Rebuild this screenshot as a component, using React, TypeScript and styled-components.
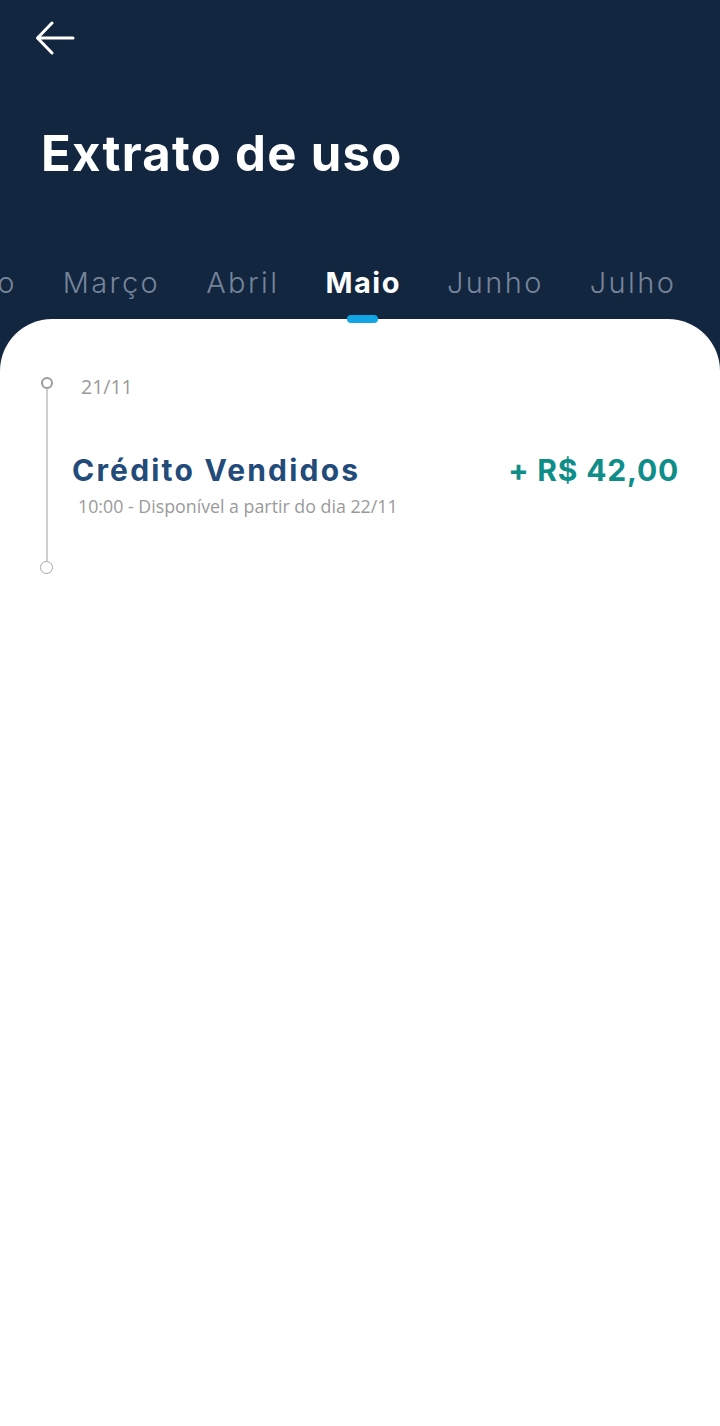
import React from 'react';
import styled, { createGlobalStyle } from 'styled-components';

const GlobalStyle = createGlobalStyle`
  html, body {
    margin: 0;
    padding: 0;
    background: #ffffff;
  }
  * {
    box-sizing: border-box;
  }
`;

const months = ['Fevereiro', 'Março', 'Abril', 'Maio', 'Junho', 'Julho'];
const activeMonth = 'Maio';

const App: React.FC = () => {
  return (
    <Page>
      <GlobalStyle />
      <Header>
        <BackButton aria-label="Voltar">
          <svg width="40" height="34" viewBox="0 0 40 34" fill="none">
            <path
              d="M38 17H3M17 2L2.5 17L17 32"
              stroke="#ffffff"
              strokeWidth="3"
              strokeLinecap="round"
              strokeLinejoin="round"
            />
          </svg>
        </BackButton>
        <Title>Extrato de uso</Title>
        <Tabs>
          {months.map((m) => (
            <Tab key={m} $active={m === activeMonth}>
              {m}
              {m === activeMonth && <Indicator />}
            </Tab>
          ))}
        </Tabs>
      </Header>
      <Card>
        <Group>
          <Rail>
            <TopDot />
            <RailLine />
            <BottomDot />
          </Rail>
          <Content>
            <DateLabel>21/11</DateLabel>
            <Entry>
              <EntryTitle>Crédito Vendidos</EntryTitle>
              <Amount>+ R$ 42,00</Amount>
            </Entry>
            <EntryInfo>10:00 - Disponível a partir do dia 22/11</EntryInfo>
          </Content>
        </Group>
      </Card>
    </Page>
  );
};

export default App;

const Page = styled.div`
  min-height: 1426px;
  display: flex;
  flex-direction: column;
  background: #12263f;
  font-family: Inter, 'Noto Sans', sans-serif;
`;

const Header = styled.header`
  display: flex;
  flex-direction: column;
  position: relative;
  z-index: 1;
`;

const BackButton = styled.button`
  align-self: flex-start;
  margin: 21px 0 0 35px;
  padding: 0;
  border: 0;
  background: transparent;
  display: flex;
  cursor: pointer;
`;

const Title = styled.h1`
  margin: 69px 0 0 41px;
  color: #ffffff;
  font-size: 49px;
  font-weight: 700;
  line-height: 60px;
  letter-spacing: 1.3px;
`;

const Tabs = styled.nav`
  display: flex;
  gap: 46px;
  margin: 60px 0 0 -130px;
  height: 79px;
  overflow: hidden;
`;

const Tab = styled.div<{ $active?: boolean }>`
  position: relative;
  flex-shrink: 0;
  height: 79px;
  padding-top: 22px;
  font-size: 29px;
  line-height: 34px;
  font-weight: ${(p) => (p.$active ? 700 : 300)};
  letter-spacing: ${(p) => (p.$active ? '1.5px' : '2.4px')};
  color: ${(p) => (p.$active ? '#ffffff' : '#76849a')};
`;

const Indicator = styled.span`
  position: absolute;
  left: 50%;
  bottom: 0;
  width: 31px;
  height: 8px;
  margin-left: -16px;
  border-radius: 4px;
  background: #12a5e6;
`;

const Card = styled.main`
  flex: 1;
  margin-top: -4px;
  padding: 56px 41px 0 40px;
  background: #ffffff;
  border-radius: 52px 52px 0 0;
`;

const Group = styled.section`
  display: flex;
`;

const Rail = styled.div`
  width: 13px;
  padding-top: 2px;
  display: flex;
  flex-direction: column;
  align-items: center;
`;

const TopDot = styled.span`
  width: 12px;
  height: 12px;
  border: 2px solid #9b9b9b;
  border-radius: 50%;
`;

const RailLine = styled.span`
  flex: 1;
  width: 2px;
  background: #cfcfcf;
`;

const BottomDot = styled.span`
  width: 13px;
  height: 13px;
  border: 1px solid #a8a8a8;
  border-radius: 50%;
`;

const Content = styled.div`
  flex: 1;
  margin-left: 19px;
  padding-bottom: 57px;
`;

const DateLabel = styled.div`
  padding-left: 9px;
  font-family: 'Open Sans', 'Noto Sans', sans-serif;
  font-size: 19.5px;
  line-height: 24px;
  color: #9a9a9a;
`;

const Entry = styled.div`
  margin-top: 53px;
  display: flex;
  justify-content: space-between;
  align-items: center;
`;

const EntryTitle = styled.div`
  font-size: 30px;
  font-weight: 700;
  line-height: 36px;
  letter-spacing: 2.2px;
  color: #234b79;
`;

const Amount = styled.div`
  font-size: 30px;
  font-weight: 700;
  line-height: 36px;
  letter-spacing: 0.8px;
  color: #0f8e89;
`;

const EntryInfo = styled.div`
  margin-top: 7px;
  padding-left: 6px;
  font-family: 'Open Sans', 'Noto Sans', sans-serif;
  font-size: 17.8px;
  line-height: 22px;
  color: #9a9a9a;
`;
